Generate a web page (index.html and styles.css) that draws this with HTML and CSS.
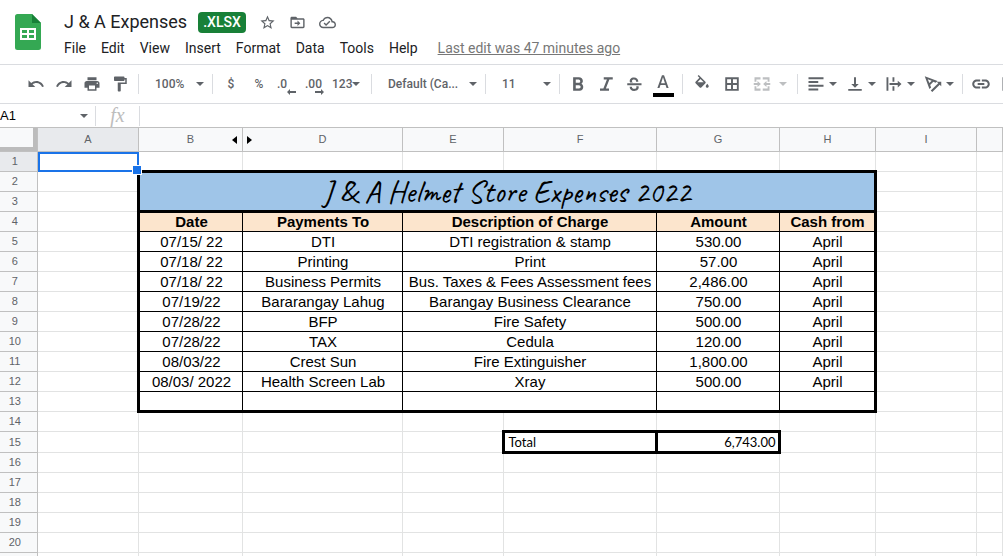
FILE: index.html
```html
<!DOCTYPE html>
<html lang="en">
<head>
  <meta charset="UTF-8" />
  <meta name="viewport" content="width=device-width, initial-scale=1.0"/>
  <title>J &amp; A Expenses</title>
  <link rel="stylesheet" href="styles.css">
</head>
<body>
  <header class="header">
    <svg class="logo" viewBox="0 0 26 36" aria-hidden="true">
      <path fill="#34a853" d="M2.500 0H17l9 9v24.500a2.500 2.500 0 0 1-2.500 2.500h-21A2.500 2.500 0 0 1 0 33.500v-31A2.500 2.500 0 0 1 2.500 0z"/>
      <path fill="#188038" d="M17 0l9 9h-9z"/>
      <path fill="#fff" fill-rule="evenodd" d="M5 14h16v12H5zM7 16v3h5v-3zM14 16v3h5v-3zM7 21v3h5v-3zM14 21v3h5v-3z"/>
    </svg>
    <div class="header-main">
      <div class="title-row">
        <h1>J &amp; A Expenses</h1>
        <span class="badge">.XLSX</span>
        <button class="title-btn" aria-label="Star">
          <svg viewBox="0 0 24 24"><path d="M22 9.240l-7.190-.62L12 2 9.190 8.630 2 9.240l5.460 4.730L5.820 21 12 17.270 18.180 21l-1.630-7.030L22 9.240zM12 15.400l-3.760 2.270 1-4.280-3.320-2.880 4.380-.38L12 6.100l1.710 4.040 4.380.38-3.320 2.880 1 4.280L12 15.400z"/></svg>
        </button>
        <button class="title-btn" aria-label="Move">
          <svg viewBox="0 0 24 24"><path d="M20 6h-8l-2-2H4c-1.100 0-2 .9-2 2v12c0 1.100.9 2 2 2h16c1.100 0 2-.9 2-2V8c0-1.100-.9-2-2-2zm0 12H4V8h16v10zM12 17l4-4-4-4v3H8v2h4z"/></svg>
        </button>
        <button class="title-btn" aria-label="Saved to Drive">
          <svg viewBox="0 0 24 24"><path d="M19.350 10.040C18.670 6.590 15.640 4 12 4 9.110 4 6.600 5.640 5.350 8.040 2.340 8.360 0 10.910 0 14c0 3.310 2.690 6 6 6h13c2.760 0 5-2.240 5-5 0-2.640-2.050-4.780-4.650-4.960zM19 18H6c-2.210 0-4-1.790-4-4 0-2.050 1.530-3.760 3.560-3.970l1.070-.11.5-.95C8.080 7.140 9.940 6 12 6c2.620 0 4.880 1.860 5.390 4.430l.3 1.500 1.530.11c1.560.1 2.780 1.410 2.780 2.960 0 1.650-1.350 3-3 3zm-9-3.820l-2.090-2.090L6.500 13.500 10 17l6.010-6.010-1.410-1.410z"/></svg>
        </button>
      </div>
      <nav class="menu">
        <button>File</button>
        <button>Edit</button>
        <button>View</button>
        <button>Insert</button>
        <button>Format</button>
        <button>Data</button>
        <button>Tools</button>
        <button>Help</button>
        <a href="#">Last edit was 47 minutes ago</a>
      </nav>
    </div>
  </header>

  <div class="toolbar">
    <button aria-label="Undo"><svg viewBox="0 0 24 24"><path d="M12.500 8c-2.650 0-5.050.99-6.900 2.600L2 7v9h9l-3.620-3.620c1.390-1.160 3.160-1.880 5.120-1.880 3.540 0 6.550 2.310 7.600 5.500l2.370-.78C21.080 11.030 17.150 8 12.500 8z"/></svg></button>
    <button aria-label="Redo"><svg viewBox="0 0 24 24"><path d="M18.400 10.600C16.550 8.990 14.150 8 11.500 8c-4.650 0-8.580 3.030-9.960 7.220L3.900 16c1.050-3.190 4.050-5.500 7.600-5.500 1.950 0 3.730.72 5.120 1.880L13 16h9V7l-3.600 3.600z"/></svg></button>
    <button aria-label="Print"><svg viewBox="0 0 24 24"><path d="M19 8H5c-1.660 0-3 1.340-3 3v6h4v4h12v-4h4v-6c0-1.660-1.340-3-3-3zm-3 11H8v-5h8v5zm3-7c-.55 0-1-.45-1-1s.45-1 1-1 1 .45 1 1-.45 1-1 1zm-1-9H6v4h12V3z"/></svg></button>
    <button aria-label="Paint format"><svg viewBox="0 0 24 24"><path d="M18 4V3c0-.55-.45-1-1-1H5c-.55 0-1 .45-1 1v4c0 .55.45 1 1 1h12c.55 0 1-.45 1-1V6h1v4H9v11c0 .55.45 1 1 1h2c.55 0 1-.45 1-1v-9h8V4h-3z"/></svg></button>
    <span class="sep"></span>
    <label class="picker zoom">
      <select aria-label="Zoom"><option>100%</option></select>
      <span class="caret"></span>
    </label>
    <span class="sep"></span>
    <button aria-label="Format as currency">$</button>
    <button aria-label="Format as percent">%</button>
    <button class="decimals" aria-label="Decrease decimal places">.0<svg class="step" viewBox="0 0 9 6"><path d="M3 0v2h6v2H3v2L0 3z"/></svg></button>
    <button class="decimals" aria-label="Increase decimal places">.00<svg class="step" viewBox="0 0 9 6"><path d="M6 0v2H0v2h6v2l3-3z"/></svg></button>
    <button class="more-formats">123<span class="caret"></span></button>
    <span class="sep"></span>
    <label class="picker font">
      <select aria-label="Font"><option>Default (Ca...</option></select>
      <span class="caret"></span>
    </label>
    <span class="sep"></span>
    <label class="picker size">
      <select aria-label="Font size"><option>11</option></select>
      <span class="caret"></span>
    </label>
    <span class="sep"></span>
    <button aria-label="Bold"><svg viewBox="0 0 24 24"><path d="M16.500 11.700c1.200-.8 2-2.100 2-3.600C18.500 5.200 16.200 3 13.300 3H5.500v18h8.700c2.800 0 4.800-2.300 4.800-5 0-2-1-3.500-2.500-4.300zM9 6h3.800c1.200 0 2.200 1 2.200 2.200s-1 2.200-2.200 2.200H9zm4.300 12H9v-4.500h4.300c1.300 0 2.200 1 2.200 2.200S14.600 18 13.300 18z"/></svg></button>
    <button aria-label="Italic"><svg viewBox="0 0 24 24"><path d="M9 3v3h4.200L8.500 18H4v3h12v-3h-4.200L16.500 6H21V3z"/></svg></button>
    <button aria-label="Strikethrough"><svg viewBox="0 0 24 24"><path d="M3 11h19v2.500H3zM17.800 9h-3c0-2-1-3-2.800-3-1.700 0-2.800.8-2.800 2 0 .8.400 1.400 1.300 2H6.700C5.300 6 8 3.300 12 3.300c3.500 0 5.800 2.200 5.800 5.700zM6.200 15.500h3c0 1.900 1.200 2.900 3 2.900 1.900 0 3-.8 3-2.100 0-.4-.1-.8-.3-1.300h3.200c1 3.600-1.700 6.200-5.900 6.200-3.700 0-6-2.200-6-5.700z"/></svg></button>
    <button class="text-color" aria-label="Text color"><svg viewBox="0 0 24 24"><path d="M10.600 3L4.500 20h2.800l1.300-4h6.800l1.300 4h2.800L13.400 3zm-1.200 10.500L12 5.800l2.600 7.700z"/></svg></button>
    <span class="sep"></span>
    <button class="wide" aria-label="Fill color"><svg viewBox="0 0 24 24"><path d="M16.560 8.940L7.620 0 6.210 1.410l2.380 2.380-5.150 5.150c-.59.59-.59 1.540 0 2.120l5.500 5.500c.29.29.68.44 1.060.44s.77-.15 1.060-.44l5.500-5.500c.59-.58.59-1.530 0-2.120zM6 9.500L10 5.210 14.300 9.500zM19 11.500s-2 2.170-2 3.500c0 1.100.9 2 2 2s2-.9 2-2c0-1.330-2-3.500-2-3.500z"/></svg></button>
    <button class="wide" aria-label="Borders"><svg viewBox="0 0 24 24"><path d="M3 3v18h18V3zm7.700 15.500H5.500v-5.200h5.200zm0-7.800H5.500V5.500h5.200zm7.800 7.800h-5.200v-5.200h5.200zm0-7.800h-5.200V5.500h5.200z"/></svg></button>
    <button class="drop merge" aria-label="Merge cells" disabled><svg viewBox="0 0 24 24"><path d="M2 3h8v3H4.500v3H2zM13 3h9v6h-2.500V6H13zM2 15h2.500v3H10v3H2zM19.500 15H22v6h-9v-3h6.500zM1 10.800h5V8l4.500 4L6 16v-2.800H1zM23 10.800h-5V8l-4.500 4 4.500 4v-2.800h5z"/></svg><span class="caret"></span></button>
    <span class="sep"></span>
    <button class="drop" aria-label="Horizontal align"><svg viewBox="0 0 24 24"><path d="M2 3h20v2.500H2zM2 8h13v2.500H2zM2 13h20v2.500H2zM2 18h13v2.500H2z"/></svg><span class="caret"></span></button>
    <button class="drop" aria-label="Vertical align"><svg viewBox="0 0 24 24"><path d="M10.700 3v9H7l5 5 5-5h-3.700V3zM3 18.500h18V21H3z"/></svg><span class="caret"></span></button>
    <button class="drop" aria-label="Text wrapping"><svg viewBox="0 0 24 24"><path d="M2 3h2.500v18H2zM10 3h2.500v6H10zM10 15h2.500v6H10zM6 10.800h11V7.500l5 4.500-5 4.500v-3.300H6z"/></svg><span class="caret"></span></button>
    <button class="drop" aria-label="Text rotation"><svg viewBox="0 0 24 24"><path fill-rule="evenodd" d="M1 1.500l17 6.500-2.500 2.200-3-1.200-4.300 4.200 1.300 3.300-2.300 2.300zM5 5.500l2.200 5.200 3-2.900zM9 20.500L19 11l-2-2h6v6l-2-2L11 22.500z"/></svg><span class="caret"></span></button>
    <span class="sep"></span>
    <button aria-label="Insert link"><svg class="link" viewBox="0 0 24 24"><path d="M3.900 12c0-1.710 1.390-3.100 3.100-3.100h4V6.500H7C3.960 6.500 1.500 8.960 1.500 12s2.460 5.500 5.500 5.500h4v-2.400H7c-1.710 0-3.100-1.390-3.100-3.100zM8 13.200h8v-2.400H8v2.400zm9-6.700h-4v2.400h4c1.710 0 3.100 1.390 3.100 3.100s-1.390 3.100-3.100 3.100h-4v2.400h4c3.040 0 5.500-2.460 5.500-5.500S20.040 6.500 17 6.500z"/></svg></button>
    <button class="wide" aria-label="Insert comment"><svg viewBox="0 0 24 24"><path d="M2 3v18h16l4 3V3zm2.500 2.500h15v13h-15zM11 8v3H8v2h3v3h2v-3h3v-2h-3V8z"/></svg></button>
  </div>

  <div class="formula-bar">
    <input class="name-box" type="text" value="A1" aria-label="Name box">
    <button class="name-drop" aria-label="Named ranges"><span class="caret"></span></button>
    <span class="fx">fx</span>
    <input class="formula" type="text" aria-label="Formula">
  </div>

  <main class="sheet">
    <table>
      <colgroup>
        <col class="c-num"><col class="c-a"><col class="c-b"><col class="c-d"><col class="c-e"><col class="c-f"><col class="c-g"><col class="c-h"><col class="c-i"><col>
      </colgroup>
      <thead>
        <tr>
          <th class="corner"><div></div></th>
          <th class="active">A</th>
          <th class="has-hidden">B
            <button class="unhide" aria-label="Show column C">
              <svg viewBox="0 0 20 8"><path d="M5 0v8L0 4zM15 0v8l5-4z"/></svg>
            </button>
          </th>
          <th>D</th>
          <th>E</th>
          <th>F</th>
          <th>G</th>
          <th>H</th>
          <th>I</th>
          <th></th>
        </tr>
      </thead>
      <tbody>
        <tr><th class="active">1</th><td class="selected"><div class="cursor"></div></td><td></td><td></td><td></td><td></td><td></td><td></td><td></td><td></td></tr>
        <tr>
          <th>2</th><td></td>
          <td class="banner" colspan="6" rowspan="2">J &amp; A Helmet Store Expenses 2022</td>
          <td></td><td></td>
        </tr>
        <tr><th>3</th><td></td><td></td><td></td></tr>
        <tr class="data labels">
          <th>4</th><td></td>
          <td class="box first">Date</td><td class="box">Payments To</td><td class="box" colspan="2">Description of Charge</td><td class="box">Amount</td><td class="box last">Cash from</td>
          <td></td><td></td>
        </tr>
        <tr class="data">
          <th>5</th><td></td>
          <td class="box first">07/15/ 22</td><td class="box">DTI</td><td class="box" colspan="2">DTI registration &amp; stamp</td><td class="box">530.00</td><td class="box last">April</td>
          <td></td><td></td>
        </tr>
        <tr class="data">
          <th>6</th><td></td>
          <td class="box first">07/18/ 22</td><td class="box">Printing</td><td class="box" colspan="2">Print</td><td class="box">57.00</td><td class="box last">April</td>
          <td></td><td></td>
        </tr>
        <tr class="data">
          <th>7</th><td></td>
          <td class="box first">07/18/ 22</td><td class="box">Business Permits</td><td class="box" colspan="2">Bus. Taxes &amp; Fees Assessment fees</td><td class="box">2,486.00</td><td class="box last">April</td>
          <td></td><td></td>
        </tr>
        <tr class="data">
          <th>8</th><td></td>
          <td class="box first">07/19/22</td><td class="box">Bararangay Lahug</td><td class="box" colspan="2">Barangay Business Clearance</td><td class="box">750.00</td><td class="box last">April</td>
          <td></td><td></td>
        </tr>
        <tr class="data">
          <th>9</th><td></td>
          <td class="box first">07/28/22</td><td class="box">BFP</td><td class="box" colspan="2">Fire Safety</td><td class="box">500.00</td><td class="box last">April</td>
          <td></td><td></td>
        </tr>
        <tr class="data">
          <th>10</th><td></td>
          <td class="box first">07/28/22</td><td class="box">TAX</td><td class="box" colspan="2">Cedula</td><td class="box">120.00</td><td class="box last">April</td>
          <td></td><td></td>
        </tr>
        <tr class="data">
          <th>11</th><td></td>
          <td class="box first">08/03/22</td><td class="box">Crest Sun</td><td class="box" colspan="2">Fire Extinguisher</td><td class="box">1,800.00</td><td class="box last">April</td>
          <td></td><td></td>
        </tr>
        <tr class="data">
          <th>12</th><td></td>
          <td class="box first">08/03/ 2022</td><td class="box">Health Screen Lab</td><td class="box" colspan="2">Xray</td><td class="box">500.00</td><td class="box last">April</td>
          <td></td><td></td>
        </tr>
        <tr class="data end">
          <th>13</th><td></td>
          <td class="box first"></td><td class="box"></td><td class="box" colspan="2"></td><td class="box"></td><td class="box last"></td>
          <td></td><td></td>
        </tr>
        <tr><th>14</th><td></td><td></td><td></td><td></td><td></td><td></td><td></td><td></td><td></td></tr>
        <tr class="total">
          <th>15</th><td></td><td></td><td></td><td></td>
          <td class="sum">Total</td><td class="sum amount">6,743.00</td>
          <td></td><td></td><td></td>
        </tr>
        <tr><th>16</th><td></td><td></td><td></td><td></td><td></td><td></td><td></td><td></td><td></td></tr>
        <tr><th>17</th><td></td><td></td><td></td><td></td><td></td><td></td><td></td><td></td><td></td></tr>
        <tr><th>18</th><td></td><td></td><td></td><td></td><td></td><td></td><td></td><td></td><td></td></tr>
        <tr><th>19</th><td></td><td></td><td></td><td></td><td></td><td></td><td></td><td></td><td></td></tr>
        <tr><th>20</th><td></td><td></td><td></td><td></td><td></td><td></td><td></td><td></td><td></td></tr>
        <tr><th></th><td></td><td></td><td></td><td></td><td></td><td></td><td></td><td></td><td></td></tr>
      </tbody>
    </table>
  </main>
</body>
</html>
```
FILE: styles.css
```css
:root {
  --icon: #5f6368;
  --line: #dadce0;
  --head-line: #c0c0c0;
  --grid-line: #e2e3e3;
  --head-bg: #f8f9fa;
  --head-active: #e8eaed;
  --blue: #1a73e8;
}

* {
  box-sizing: border-box;
  margin: 0;
  padding: 0;
}

body {
  height: 100vh;
  display: flex;
  flex-direction: column;
  overflow: hidden;
  background: #fff;
  color: #202124;
  font-family: Roboto, "Liberation Sans", sans-serif;
}

button,
input,
select {
  border: none;
  outline: none;
  background: none;
  color: inherit;
  font-family: inherit;
}

svg {
  display: block;
  fill: currentColor;
}

/* Header */
.header {
  display: flex;
  flex: none;
  gap: 16px;
  height: 64px;
  padding: 8px 15px 0;
}

.logo {
  width: 26px;
  height: 36px;
  margin-top: 6px;
}

.title-row {
  display: flex;
  align-items: center;
  height: 28px;
  padding-left: 7px;
}

h1 {
  font-size: 18px;
  font-weight: 400;
  line-height: 24px;
  margin-right: 11px;
}

.badge {
  background: #188038;
  border-radius: 4px;
  color: #fff;
  font-size: 14px;
  font-weight: 500;
  line-height: 21px;
  padding: 0 5px;
  margin-right: 7px;
}

.title-btn {
  display: flex;
  align-items: center;
  justify-content: center;
  width: 30px;
  height: 24px;
  color: var(--icon);
}

.title-btn svg {
  width: 17px;
  height: 17px;
}

.menu {
  display: flex;
  align-items: center;
  height: 24px;
  white-space: nowrap;
}

.menu button {
  font-size: 14px;
  line-height: 20px;
  padding: 0 8px 0 7px;
}

.menu a {
  color: #777;
  font-size: 14px;
  line-height: 18px;
  margin-left: 12px;
}

/* Toolbar */
.toolbar {
  display: flex;
  flex: none;
  align-items: center;
  height: 40px;
  padding-left: 22px;
  border-top: 1px solid var(--line);
  border-bottom: 1px solid var(--line);
  color: var(--icon);
  overflow: hidden;
}

.toolbar button {
  position: relative;
  display: flex;
  flex: none;
  align-items: center;
  justify-content: center;
  width: 28px;
  height: 26px;
  font-size: 12px;
  font-weight: 500;
}

.toolbar svg {
  width: 18px;
  height: 18px;
}

.toolbar .wide,
.toolbar .text-color {
  width: 30px;
}

.toolbar .text-color {
  padding-bottom: 4px;
}

.text-color::after {
  content: "";
  position: absolute;
  left: 5px;
  bottom: 0;
  width: 21px;
  height: 4px;
  background: #000;
}

.toolbar .decimals {
  justify-content: flex-start;
  padding-left: 4px;
}

.toolbar svg.step {
  position: absolute;
  right: 5px;
  bottom: 2px;
  width: 9px;
  height: 6px;
}

.toolbar .more-formats {
  justify-content: flex-start;
  padding-left: 3px;
  width: 38px;
}

.toolbar .drop {
  gap: 4px;
  width: 39px;
}

.toolbar .merge {
  gap: 8px;
  width: 46px;
  color: #bdbfc1;
}

.toolbar .link {
  width: 20px;
  height: 20px;
}

.sep {
  flex: none;
  width: 1px;
  height: 20px;
  margin: 0 4px;
  background: var(--line);
}

.caret {
  flex: none;
  border: 4px solid transparent;
  border-top-color: currentColor;
  border-bottom: none;
}

.picker {
  display: flex;
  flex: none;
  align-items: center;
  padding: 0 4px 0 12px;
}

.picker select {
  flex: 1;
  min-width: 0;
  appearance: none;
  font-size: 12px;
  font-weight: 500;
  line-height: 20px;
}

.zoom,
.size {
  width: 65px;
}

.font {
  width: 105px;
}

/* Formula bar */
.formula-bar {
  display: flex;
  flex: none;
  align-items: center;
  height: 23px;
  color: #000;
  font-family: "Liberation Sans", sans-serif;
}

.name-box {
  width: 80px;
  font-size: 13px;
}

.name-drop {
  display: flex;
  align-items: center;
  width: 16px;
  height: 20px;
  color: var(--icon);
  border-right: 1px solid var(--line);
}

.fx {
  width: 44px;
  height: 20px;
  border-right: 1px solid var(--line);
  color: #bdbdbd;
  font: italic 20px/18px "Liberation Serif", serif;
  text-align: center;
}

.formula {
  flex: 1;
  padding: 0 6px;
  font-size: 13px;
}

/* Sheet */
.sheet {
  flex: 1;
  min-height: 0;
  overflow: hidden;
  border-top: 1px solid var(--head-line);
}

table {
  width: 100%;
  min-width: 977px;
  border-collapse: collapse;
  table-layout: fixed;
  font-family: "Liberation Sans", sans-serif;
}

.c-num { width: 37px; }
.c-a { width: 101px; }
.c-b { width: 104px; }
.c-d { width: 160px; }
.c-e { width: 101px; }
.c-f { width: 153px; }
.c-g { width: 123px; }
.c-h { width: 96px; }
.c-i { width: 101px; }

th {
  height: 20px;
  background: var(--head-bg);
  border-right: 1px solid var(--head-line);
  border-bottom: 1px solid var(--head-line);
  color: var(--icon);
  font-size: 11px;
  font-weight: 400;
  line-height: 16px;
}

tbody th {
  padding: 0 7px 1px 0;
}

thead th {
  height: 23px;
  padding: 0 0 1px 1px;
}

th.active {
  background: var(--head-active);
}

thead .corner {
  padding: 0;
}

.corner div {
  height: 23px;
  border-right: 4px solid #bcbcbc;
  border-bottom: 4px solid #bcbcbc;
}

.has-hidden {
  position: relative;
}

.unhide {
  position: absolute;
  top: 8px;
  right: -10px;
  z-index: 1;
}

.unhide svg {
  width: 20px;
  height: 8px;
  fill: #000;
}

td {
  height: 20px;
  border-right: 1px solid var(--grid-line);
  border-bottom: 1px solid var(--grid-line);
  color: #000;
  font-size: 15px;
  line-height: 16px;
  white-space: nowrap;
}

.selected {
  position: relative;
}

.cursor {
  position: absolute;
  inset: 0 -1px -1px 0;
  border: 2px solid var(--blue);
}

.cursor::after {
  content: "";
  position: absolute;
  right: -5px;
  bottom: -5px;
  width: 8px;
  height: 8px;
  background: var(--blue);
  border: 1px solid #fff;
}

.banner {
  border: 3px solid #000;
  background: #9fc5e8;
  font: 500 31px/32px Caveat, Lato, sans-serif;
  text-align: center;
}

.box {
  border: 1px solid #000;
  padding-left: 2px;
  text-align: center;
}

.first {
  border-left: 3px solid #000;
}

.last {
  border-right: 3px solid #000;
}

.end .box {
  border-bottom: 3px solid #000;
}

.labels .box {
  background: #fce5cd;
  font-weight: 700;
}

.total th,
.total td {
  height: 21px;
}

.total .sum {
  padding: 0 4px 1px;
  border: 3px solid #000;
  font: 13px/16px Lato, sans-serif;
}

.total .amount {
  padding: 0 2px 1px;
  text-align: right;
}
```
